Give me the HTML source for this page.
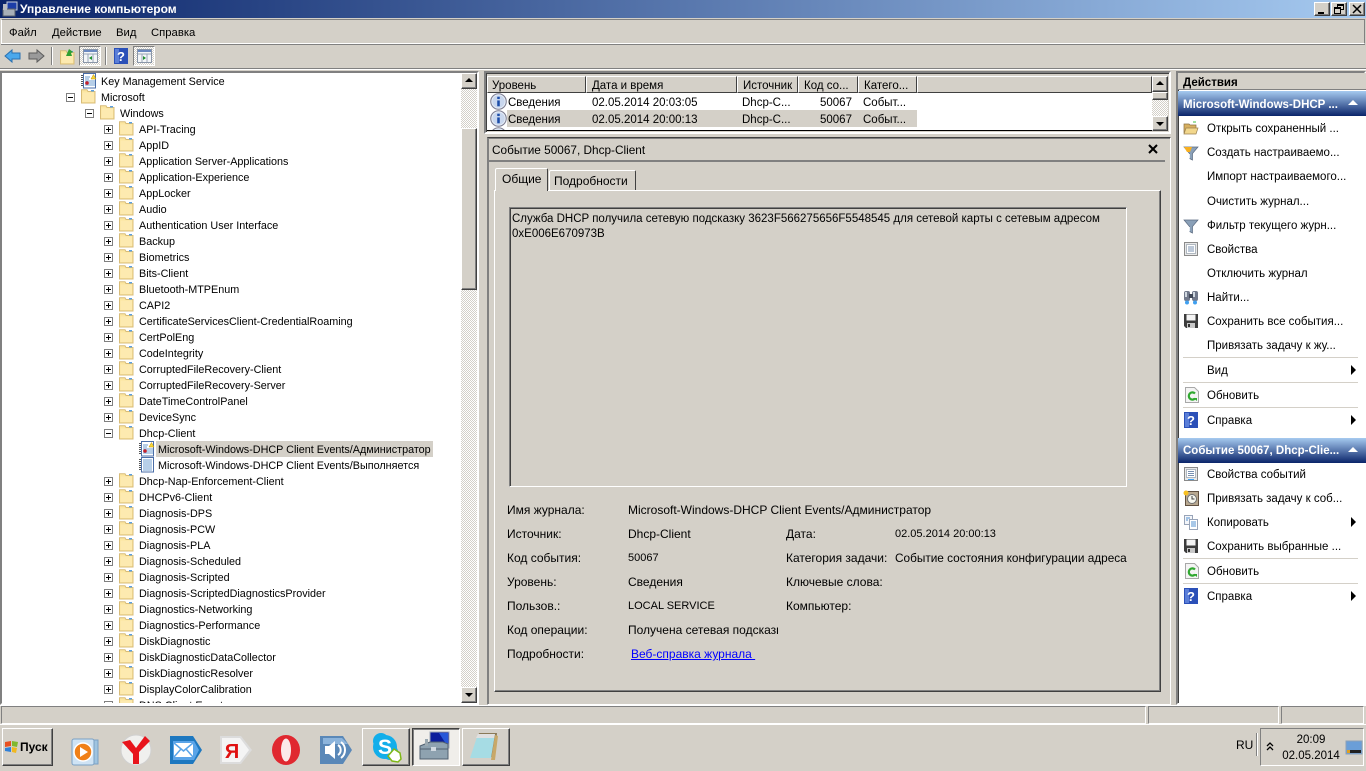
<!DOCTYPE html>
<html lang="ru"><head><meta charset="utf-8"><title>Управление компьютером</title>
<style>
*{box-sizing:border-box}
html,body{margin:0;padding:0}
body{width:1366px;height:768px;overflow:hidden;position:relative;background:#d4d0c8;font:11.5px/18px "Liberation Sans","DejaVu Sans",sans-serif;color:#000}
.a{position:absolute;white-space:nowrap}
.d{font-size:12px}
.n{font-size:11px}
svg{position:absolute;display:block;overflow:visible}
.sunk{border:1px solid;border-color:#808080 #fff #fff #808080}
.sunk2{border:2px solid;border-color:#808080 #fff #fff #808080;box-shadow:inset 1px 1px 0 #404040}
.rais{background:#d4d0c8;border:1px solid;border-color:#fff #404040 #404040 #fff;box-shadow:inset -1px -1px 0 #808080}
.dith{background:repeating-conic-gradient(#fff 0 25%,#d4d0c8 0 50%) 0 0/2px 2px}
.tree{position:absolute;left:2px;top:73px;width:459px;height:630px;overflow:hidden;background:#fff;font-size:10.8px}
.r{position:relative;height:16px;line-height:18px;white-space:nowrap}
.r svg{top:0}
.l1{padding-left:99px}.l2{padding-left:118px}.l3{padding-left:137px}.l4{padding-left:156px}
.h{position:absolute;top:0;height:17px;line-height:19px;padding-left:5px;background:#d4d0c8;border:1px solid;border-color:#fff #404040 #404040 #fff;white-space:nowrap;overflow:hidden}
.sep{position:absolute;left:1183px;width:175px;height:1px;background:#d4d0c8}
.tri{position:absolute;left:1351px;width:0;height:0;border-left:5px solid #000;border-top:5px solid transparent;border-bottom:5px solid transparent}
.bb{position:absolute;top:728px;height:38px}
</style></head><body>
<svg width="0" height="0" style="position:absolute"><defs>
<symbol id="f" viewBox="0 0 16 16"><path d="M.5 14V.8h5.500l1 1.700h7V14z" fill="#fce6a0" stroke="#d8bc78"/><rect x="1.500" y="3.500" width="11.500" height="9.500" fill="#fdeab0"/><rect x="10" y="1" width="3" height="1.500" fill="#5ba0e0"/></symbol>
<symbol id="pl" viewBox="0 0 9 9"><rect x=".5" y=".5" width="8" height="8" fill="#fff" stroke="#808080"/><path d="M2 4.500h5M4.500 2v5" stroke="#000"/></symbol>
<symbol id="mi" viewBox="0 0 9 9"><rect x=".5" y=".5" width="8" height="8" fill="#fff" stroke="#808080"/><path d="M2 4.500h5" stroke="#000"/></symbol>
<symbol id="log" viewBox="0 0 16 16"><rect x="2.500" y=".5" width="12" height="14.500" fill="#fff" stroke="#4a6ea8"/><path d="M1 2v12" stroke="#555" stroke-width="2" stroke-dasharray="1 1"/><path d="M4 4h5M4 6h4M4 8h10M4 10h10M4 12h10" stroke="#6f9fd0"/><path d="M10 6l2.500-4.500L15 6z" fill="#f8d838" stroke="#c09000" stroke-width=".5"/><circle cx="6" cy="10" r="1.800" fill="#c8202a"/></symbol>
<symbol id="log2" viewBox="0 0 16 16"><rect x="2.500" y=".5" width="12" height="14.500" fill="#fff" stroke="#4a6ea8"/><path d="M1 2v12" stroke="#555" stroke-width="2" stroke-dasharray="1 1"/><path d="M4 3h9M4 5h9M4 7h9M4 9h9M4 11h9M4 13h9" stroke="#6f9fd0"/></symbol>
<symbol id="inf" viewBox="0 0 16 16"><circle cx="8" cy="8" r="7.300" fill="#e6edf7" stroke="#7c7c90"/><circle cx="8" cy="8" r="5.800" fill="#c9d7ee"/><rect x="6.800" y="7" width="2.400" height="5.500" fill="#1d4da8"/><rect x="6.800" y="3.500" width="2.400" height="2.200" fill="#1d4da8"/></symbol>
<symbol id="help" viewBox="0 0 14 16"><rect width="14" height="16" fill="#2b50b8"/><rect x="1" y="1" width="4" height="14" fill="#5a7ed8"/><text x="7" y="13" font-family="Liberation Sans" font-weight="bold" font-size="13" fill="#fff" text-anchor="middle">?</text></symbol>
<symbol id="save" viewBox="0 0 16 16"><path d="M1 1h14v14H3l-2-2z" fill="#3c3c3c"/><rect x="3.500" y="1.500" width="9" height="6" fill="#f4f4f4"/><rect x="4" y="10" width="8" height="5" fill="#c8c8c8"/><rect x="5" y="11" width="2" height="3" fill="#333"/></symbol>
<symbol id="ref" viewBox="0 0 14 16"><path d="M.5.5h9l4 4v11H.5z" fill="#f4f4f4" stroke="#a8a8a8"/><path d="M10 11.500A3.600 3.600 0 1 1 10 6.500" fill="none" stroke="#30a830" stroke-width="2.200"/><path d="M8 11h4v3z" fill="#30a830"/></symbol>
<symbol id="filt" viewBox="0 0 16 16"><path d="M1 2h14L9.500 8.500V15l-3-1.500v-5z" fill="#8aa0b8" stroke="#5a6a80" stroke-width=".7"/><path d="M6.500 9v4.500" stroke="#e8eef4"/></symbol>
</defs></svg>

<!-- title -->
<div class="a" style="left:0;top:0;width:1366px;height:18px;background:linear-gradient(90deg,#0a246a 0,#a6caf0 100%)"></div>
<svg style="left:2px;top:1px" width="16" height="16" viewBox="0 0 16 16"><rect x="5" y="1" width="10" height="8" fill="#1c3ea8" stroke="#c8d0dc"/><rect x="1" y="8" width="12" height="7" fill="#a8b0b8" stroke="#58606a"/><rect x="1" y="3" width="4" height="6" fill="#b8bcc0"/></svg>
<div class="a" style="left:20px;top:1px;line-height:16px;font-weight:bold;font-size:12px;color:#fff">Управление компьютером</div>
<div class="a rais" style="left:1314px;top:2px;width:16px;height:14px"><div class="a" style="left:3px;top:9px;width:6px;height:2px;background:#000"></div></div>
<div class="a rais" style="left:1331px;top:2px;width:16px;height:14px"><div class="a" style="left:5px;top:1px;width:7px;height:6px;border:1px solid #000;border-top-width:2px"></div><div class="a" style="left:2px;top:4px;width:7px;height:7px;background:#d4d0c8;border:1px solid #000;border-top-width:2px"></div></div>
<div class="a rais" style="left:1349px;top:2px;width:16px;height:14px"><svg style="left:3px;top:2px" width="8" height="8"><path d="M0 0l8 8M8 0l-8 8" stroke="#000" stroke-width="1.500"/></svg></div>

<!-- menu -->
<div class="a" style="left:1px;top:19px;width:1364px;height:25px;border:1px solid;border-color:#808080 #808080 #fff #fff;box-shadow:0 1px 0 #808080"></div>
<div class="a" style="left:9px;top:24px;font-size:11.300px">Файл</div>
<div class="a" style="left:52px;top:24px;font-size:11.300px">Действие</div>
<div class="a" style="left:116px;top:24px;font-size:11.300px">Вид</div>
<div class="a" style="left:151px;top:24px;font-size:11.300px">Справка</div>

<!-- toolbar -->
<div class="a" style="left:0;top:68px;width:1366px;height:2px;background:#808080;border-bottom:1px solid #fff"></div>
<svg style="left:4px;top:48px" width="18" height="16" viewBox="0 0 18 16"><path d="M1 8l7-6v3h8v6H8v3z" fill="#4aa8ec" stroke="#2a70b0"/></svg>
<svg style="left:27px;top:48px" width="18" height="16" viewBox="0 0 18 16"><path d="M17 8l-7-6v3H2v6h8v3z" fill="#9a9a9a" stroke="#5c5c5c"/></svg>
<div class="a" style="left:51px;top:47px;width:2px;height:18px;border-left:1px solid #808080;border-right:1px solid #fff"></div>
<svg style="left:60px;top:50px" width="16" height="16"><use href="#f" width="16" height="16"/></svg>
<svg style="left:60px;top:47px" width="16" height="16"><path d="M6 9l3-7 4 3-2 1 1 3z" fill="#30a030"/></svg>
<div class="a dith" style="left:79px;top:46px;width:22px;height:20px;border:1px solid;border-color:#808080 #fff #fff #808080"></div>
<svg style="left:83px;top:49px" width="15" height="14" viewBox="0 0 15 14"><rect x=".5" y=".5" width="14" height="13" fill="#f4f6f8" stroke="#8a96a8"/><rect x="1" y="1" width="13" height="2" fill="#6a88c0"/><path d="M1 5h13M5 5v8M10 5v8" stroke="#9aa6b8"/><path d="M9 7v4l-3-2z" fill="#209030"/></svg>
<div class="a" style="left:105px;top:47px;width:2px;height:18px;border-left:1px solid #808080;border-right:1px solid #fff"></div>
<svg style="left:114px;top:48px" width="14" height="16"><use href="#help" width="14" height="16"/></svg>
<div class="a dith" style="left:133px;top:46px;width:22px;height:20px;border:1px solid;border-color:#808080 #fff #fff #808080"></div>
<svg style="left:137px;top:49px" width="15" height="14" viewBox="0 0 15 14"><rect x=".5" y=".5" width="14" height="13" fill="#f4f6f8" stroke="#8a96a8"/><rect x="1" y="1" width="13" height="2" fill="#6a88c0"/><path d="M1 5h13M5 5v8M10 5v8" stroke="#9aa6b8"/><path d="M6 7v4l3-2z" fill="#209030"/></svg>

<!-- left panel -->
<div class="a sunk2" style="left:0;top:71px;width:479px;height:634px"></div>
<div class="tree">
<div class="r l1"><svg style="left:79px" width="16" height="16"><use href="#log" width="16" height="16"/></svg>Key Management Service</div>
<div class="r l1"><svg style="left:64px;top:4px" width="9" height="9"><use href="#mi" width="9" height="9"/></svg><svg style="left:79px" width="16" height="16"><use href="#f" width="16" height="16"/></svg>Microsoft</div>
<div class="r l2"><svg style="left:83px;top:4px" width="9" height="9"><use href="#mi" width="9" height="9"/></svg><svg style="left:98px" width="16" height="16"><use href="#f" width="16" height="16"/></svg>Windows</div>
<div class="r l3"><svg style="left:102px;top:4px" width="9" height="9"><use href="#pl" width="9" height="9"/></svg><svg style="left:117px" width="16" height="16"><use href="#f" width="16" height="16"/></svg>API-Tracing</div>
<div class="r l3"><svg style="left:102px;top:4px" width="9" height="9"><use href="#pl" width="9" height="9"/></svg><svg style="left:117px" width="16" height="16"><use href="#f" width="16" height="16"/></svg>AppID</div>
<div class="r l3"><svg style="left:102px;top:4px" width="9" height="9"><use href="#pl" width="9" height="9"/></svg><svg style="left:117px" width="16" height="16"><use href="#f" width="16" height="16"/></svg>Application Server-Applications</div>
<div class="r l3"><svg style="left:102px;top:4px" width="9" height="9"><use href="#pl" width="9" height="9"/></svg><svg style="left:117px" width="16" height="16"><use href="#f" width="16" height="16"/></svg>Application-Experience</div>
<div class="r l3"><svg style="left:102px;top:4px" width="9" height="9"><use href="#pl" width="9" height="9"/></svg><svg style="left:117px" width="16" height="16"><use href="#f" width="16" height="16"/></svg>AppLocker</div>
<div class="r l3"><svg style="left:102px;top:4px" width="9" height="9"><use href="#pl" width="9" height="9"/></svg><svg style="left:117px" width="16" height="16"><use href="#f" width="16" height="16"/></svg>Audio</div>
<div class="r l3"><svg style="left:102px;top:4px" width="9" height="9"><use href="#pl" width="9" height="9"/></svg><svg style="left:117px" width="16" height="16"><use href="#f" width="16" height="16"/></svg>Authentication User Interface</div>
<div class="r l3"><svg style="left:102px;top:4px" width="9" height="9"><use href="#pl" width="9" height="9"/></svg><svg style="left:117px" width="16" height="16"><use href="#f" width="16" height="16"/></svg>Backup</div>
<div class="r l3"><svg style="left:102px;top:4px" width="9" height="9"><use href="#pl" width="9" height="9"/></svg><svg style="left:117px" width="16" height="16"><use href="#f" width="16" height="16"/></svg>Biometrics</div>
<div class="r l3"><svg style="left:102px;top:4px" width="9" height="9"><use href="#pl" width="9" height="9"/></svg><svg style="left:117px" width="16" height="16"><use href="#f" width="16" height="16"/></svg>Bits-Client</div>
<div class="r l3"><svg style="left:102px;top:4px" width="9" height="9"><use href="#pl" width="9" height="9"/></svg><svg style="left:117px" width="16" height="16"><use href="#f" width="16" height="16"/></svg>Bluetooth-MTPEnum</div>
<div class="r l3"><svg style="left:102px;top:4px" width="9" height="9"><use href="#pl" width="9" height="9"/></svg><svg style="left:117px" width="16" height="16"><use href="#f" width="16" height="16"/></svg>CAPI2</div>
<div class="r l3"><svg style="left:102px;top:4px" width="9" height="9"><use href="#pl" width="9" height="9"/></svg><svg style="left:117px" width="16" height="16"><use href="#f" width="16" height="16"/></svg>CertificateServicesClient-CredentialRoaming</div>
<div class="r l3"><svg style="left:102px;top:4px" width="9" height="9"><use href="#pl" width="9" height="9"/></svg><svg style="left:117px" width="16" height="16"><use href="#f" width="16" height="16"/></svg>CertPolEng</div>
<div class="r l3"><svg style="left:102px;top:4px" width="9" height="9"><use href="#pl" width="9" height="9"/></svg><svg style="left:117px" width="16" height="16"><use href="#f" width="16" height="16"/></svg>CodeIntegrity</div>
<div class="r l3"><svg style="left:102px;top:4px" width="9" height="9"><use href="#pl" width="9" height="9"/></svg><svg style="left:117px" width="16" height="16"><use href="#f" width="16" height="16"/></svg>CorruptedFileRecovery-Client</div>
<div class="r l3"><svg style="left:102px;top:4px" width="9" height="9"><use href="#pl" width="9" height="9"/></svg><svg style="left:117px" width="16" height="16"><use href="#f" width="16" height="16"/></svg>CorruptedFileRecovery-Server</div>
<div class="r l3"><svg style="left:102px;top:4px" width="9" height="9"><use href="#pl" width="9" height="9"/></svg><svg style="left:117px" width="16" height="16"><use href="#f" width="16" height="16"/></svg>DateTimeControlPanel</div>
<div class="r l3"><svg style="left:102px;top:4px" width="9" height="9"><use href="#pl" width="9" height="9"/></svg><svg style="left:117px" width="16" height="16"><use href="#f" width="16" height="16"/></svg>DeviceSync</div>
<div class="r l3"><svg style="left:102px;top:4px" width="9" height="9"><use href="#mi" width="9" height="9"/></svg><svg style="left:117px" width="16" height="16"><use href="#f" width="16" height="16"/></svg>Dhcp-Client</div>
<div class="r l4"><div class="a" style="left:154px;top:0;height:16px;padding:0 2px;background:#d4d0c8">Microsoft-Windows-DHCP Client Events/Администратор</div><svg style="left:137px" width="16" height="16"><use href="#log" width="16" height="16"/></svg></div>
<div class="r l4"><svg style="left:137px" width="16" height="16"><use href="#log2" width="16" height="16"/></svg>Microsoft-Windows-DHCP Client Events/Выполняется</div>
<div class="r l3"><svg style="left:102px;top:4px" width="9" height="9"><use href="#pl" width="9" height="9"/></svg><svg style="left:117px" width="16" height="16"><use href="#f" width="16" height="16"/></svg>Dhcp-Nap-Enforcement-Client</div>
<div class="r l3"><svg style="left:102px;top:4px" width="9" height="9"><use href="#pl" width="9" height="9"/></svg><svg style="left:117px" width="16" height="16"><use href="#f" width="16" height="16"/></svg>DHCPv6-Client</div>
<div class="r l3"><svg style="left:102px;top:4px" width="9" height="9"><use href="#pl" width="9" height="9"/></svg><svg style="left:117px" width="16" height="16"><use href="#f" width="16" height="16"/></svg>Diagnosis-DPS</div>
<div class="r l3"><svg style="left:102px;top:4px" width="9" height="9"><use href="#pl" width="9" height="9"/></svg><svg style="left:117px" width="16" height="16"><use href="#f" width="16" height="16"/></svg>Diagnosis-PCW</div>
<div class="r l3"><svg style="left:102px;top:4px" width="9" height="9"><use href="#pl" width="9" height="9"/></svg><svg style="left:117px" width="16" height="16"><use href="#f" width="16" height="16"/></svg>Diagnosis-PLA</div>
<div class="r l3"><svg style="left:102px;top:4px" width="9" height="9"><use href="#pl" width="9" height="9"/></svg><svg style="left:117px" width="16" height="16"><use href="#f" width="16" height="16"/></svg>Diagnosis-Scheduled</div>
<div class="r l3"><svg style="left:102px;top:4px" width="9" height="9"><use href="#pl" width="9" height="9"/></svg><svg style="left:117px" width="16" height="16"><use href="#f" width="16" height="16"/></svg>Diagnosis-Scripted</div>
<div class="r l3"><svg style="left:102px;top:4px" width="9" height="9"><use href="#pl" width="9" height="9"/></svg><svg style="left:117px" width="16" height="16"><use href="#f" width="16" height="16"/></svg>Diagnosis-ScriptedDiagnosticsProvider</div>
<div class="r l3"><svg style="left:102px;top:4px" width="9" height="9"><use href="#pl" width="9" height="9"/></svg><svg style="left:117px" width="16" height="16"><use href="#f" width="16" height="16"/></svg>Diagnostics-Networking</div>
<div class="r l3"><svg style="left:102px;top:4px" width="9" height="9"><use href="#pl" width="9" height="9"/></svg><svg style="left:117px" width="16" height="16"><use href="#f" width="16" height="16"/></svg>Diagnostics-Performance</div>
<div class="r l3"><svg style="left:102px;top:4px" width="9" height="9"><use href="#pl" width="9" height="9"/></svg><svg style="left:117px" width="16" height="16"><use href="#f" width="16" height="16"/></svg>DiskDiagnostic</div>
<div class="r l3"><svg style="left:102px;top:4px" width="9" height="9"><use href="#pl" width="9" height="9"/></svg><svg style="left:117px" width="16" height="16"><use href="#f" width="16" height="16"/></svg>DiskDiagnosticDataCollector</div>
<div class="r l3"><svg style="left:102px;top:4px" width="9" height="9"><use href="#pl" width="9" height="9"/></svg><svg style="left:117px" width="16" height="16"><use href="#f" width="16" height="16"/></svg>DiskDiagnosticResolver</div>
<div class="r l3"><svg style="left:102px;top:4px" width="9" height="9"><use href="#pl" width="9" height="9"/></svg><svg style="left:117px" width="16" height="16"><use href="#f" width="16" height="16"/></svg>DisplayColorCalibration</div>
<div class="r l3"><svg style="left:102px;top:4px" width="9" height="9"><use href="#pl" width="9" height="9"/></svg><svg style="left:117px" width="16" height="16"><use href="#f" width="16" height="16"/></svg>DNS Client Events</div>
</div>
<!-- left scrollbar -->
<div class="a dith" style="left:461px;top:73px;width:16px;height:630px"></div>
<div class="a rais" style="left:461px;top:73px;width:16px;height:16px"><div class="a" style="left:3px;top:4px;border:4px solid transparent;border-bottom:4px solid #000;border-top:0"></div></div>
<div class="a rais" style="left:461px;top:128px;width:16px;height:162px"></div>
<div class="a rais" style="left:461px;top:687px;width:16px;height:16px"><div class="a" style="left:3px;top:5px;border:4px solid transparent;border-top:4px solid #000;border-bottom:0"></div></div>

<!-- splitter bg: event list -->
<div class="a" style="left:484px;top:71px;width:687px;height:63px;border:2px solid;border-color:#808080 #fff #fff #808080;box-shadow:inset 1px 1px 0 #404040"></div>
<div class="a" style="left:487px;top:76px;width:665px;height:55px;background:#fff;overflow:hidden;border-bottom:1px solid #000">
<div class="h" style="left:0;width:99px;padding-left:4px">Уровень</div>
<div class="h" style="left:99px;width:151px">Дата и время</div>
<div class="h" style="left:250px;width:61px">Источник</div>
<div class="h" style="left:311px;width:60px">Код со...</div>
<div class="h" style="left:371px;width:59px">Катего...</div>
<div class="h" style="left:430px;width:235px"></div>
<div class="a" style="left:20px;top:34px;width:410px;height:17px;background:#d4d0c8"></div>
<svg style="left:3px;top:17px" width="17" height="17"><use href="#inf" width="17" height="17"/></svg>
<svg style="left:3px;top:34px" width="17" height="17"><use href="#inf" width="17" height="17"/></svg>
<svg style="left:3px;top:51px" width="17" height="17"><use href="#inf" width="17" height="17"/></svg>
<div class="a" style="left:21px;top:18px">Сведения</div><div class="a" style="left:105px;top:18px">02.05.2014 20:03:05</div><div class="a" style="left:255px;top:18px">Dhcp-C...</div><div class="a" style="left:333px;top:18px">50067</div><div class="a" style="left:376px;top:18px">Событ...</div>
<div class="a" style="left:21px;top:35px">Сведения</div><div class="a" style="left:105px;top:35px">02.05.2014 20:00:13</div><div class="a" style="left:255px;top:35px">Dhcp-C...</div><div class="a" style="left:333px;top:35px">50067</div><div class="a" style="left:376px;top:35px">Событ...</div>
</div>
<div class="a dith" style="left:1152px;top:76px;width:16px;height:55px"></div>
<div class="a rais" style="left:1152px;top:76px;width:16px;height:16px"><div class="a" style="left:3px;top:4px;border:4px solid transparent;border-bottom:4px solid #000;border-top:0"></div></div>
<div class="a rais" style="left:1152px;top:92px;width:16px;height:8px"></div>
<div class="a rais" style="left:1152px;top:116px;width:16px;height:15px"><div class="a" style="left:3px;top:5px;border:4px solid transparent;border-top:4px solid #000;border-bottom:0"></div></div>

<!-- details -->
<div class="a" style="left:487px;top:137px;width:684px;height:568px;border:1px solid;border-color:#404040 #fff #fff #808080;box-shadow:inset 1px 1px 0 #808080"></div>
<div class="a" style="left:492px;top:141px;font-size:11.800px">Событие 50067, Dhcp-Client</div>
<svg style="left:1148px;top:144px" width="10" height="10"><path d="M1 1l8 8M9 1l-8 8" stroke="#000" stroke-width="2"/></svg>
<div class="a" style="left:489px;top:160px;width:676px;height:2px;background:#808080"></div>
<!-- tab body -->
<div class="a" style="left:494px;top:190px;width:667px;height:502px;border:1px solid;border-color:#fff #404040 #404040 #fff;box-shadow:inset -1px -1px 0 #808080"></div>
<div class="a d" style="left:495px;top:168px;width:53px;height:23px;background:#d4d0c8;border:1px solid #fff;border-bottom:0;border-right:1px solid #404040;border-radius:2px 2px 0 0;padding-left:6px;line-height:21px">Общие</div>
<div class="a d" style="left:549px;top:170px;width:87px;height:20px;background:#d4d0c8;border:1px solid #fff;border-bottom:0;border-right:1px solid #404040;border-radius:2px 2px 0 0;padding-left:4px;line-height:21px">Подробности</div>
<div class="a" style="left:509px;top:207px;width:618px;height:280px;border:1px solid;border-color:#808080 #fff #fff #808080;box-shadow:inset 1px 1px 0 #404040"></div>
<div class="a" style="left:512px;top:212px;line-height:15px">Служба DHCP получила сетевую подсказку 3623F566275656F5548545 для сетевой карты с сетевым адресом<br>0xE006E670973B</div>
<div class="a d" style="left:507px;top:501px">Имя журнала:</div><div class="a d" style="left:628px;top:501px">Microsoft-Windows-DHCP Client Events/Администратор</div>
<div class="a d" style="left:507px;top:525px">Источник:</div><div class="a d" style="left:628px;top:525px">Dhcp-Client</div><div class="a d" style="left:786px;top:525px">Дата:</div><div class="a n" style="left:895px;top:525px">02.05.2014 20:00:13</div>
<div class="a d" style="left:507px;top:549px">Код события:</div><div class="a n" style="left:628px;top:549px">50067</div><div class="a d" style="left:786px;top:549px">Категория задачи:</div><div class="a" style="left:895px;top:549px;font-size:11.800px">Событие состояния конфигурации адреса</div>
<div class="a d" style="left:507px;top:573px">Уровень:</div><div class="a d" style="left:628px;top:573px">Сведения</div><div class="a d" style="left:786px;top:573px">Ключевые слова:</div>
<div class="a d" style="left:507px;top:597px">Пользов.:</div><div class="a n" style="left:628px;top:597px">LOCAL SERVICE</div><div class="a d" style="left:786px;top:597px">Компьютер:</div>
<div class="a d" style="left:507px;top:621px">Код операции:</div><div class="a d" style="left:628px;top:621px;width:150px;overflow:hidden">Получена сетевая подсказка</div>
<div class="a d" style="left:507px;top:645px">Подробности:</div><div class="a d" style="left:631px;top:645px;color:#00f;text-decoration:underline">Веб-справка журнала&nbsp;</div>

<!-- actions -->
<div class="a" style="left:1176px;top:71px;width:190px;height:634px;background:#fff;border:2px solid;border-color:#808080 #fff #fff #808080;box-shadow:inset 1px 1px 0 #404040"></div>
<div class="a" style="left:1178px;top:73px;width:188px;height:17px;background:#d4d0c8;padding-left:5px;font-weight:bold;border-bottom:1px solid #808080;line-height:21px">Действия</div>
<div class="a" style="left:1178px;top:91px;width:188px;height:25px;background:linear-gradient(180deg,#a6caf0,#0a246a);color:#fff;font-weight:bold;padding-left:5px;line-height:29px">Microsoft-Windows-DHCP ...</div>
<div class="a" style="left:1348px;top:100px;border:5px solid transparent;border-bottom:5px solid #fff;border-top:0"></div>
<div class="a" style="left:1178px;top:438px;width:188px;height:25px;background:linear-gradient(180deg,#a6caf0,#0a246a);color:#fff;font-weight:bold;padding-left:5px;line-height:27px">Событие 50067, Dhcp-Clie...</div>
<div class="a" style="left:1348px;top:447px;border:5px solid transparent;border-bottom:5px solid #fff;border-top:0"></div>

<div class="a" style="left:1207px;top:120px">Открыть сохраненный ...</div>
<div class="a" style="left:1207px;top:144px">Создать настраиваемо...</div>
<div class="a" style="left:1207px;top:168px">Импорт настраиваемого...</div>
<div class="a" style="left:1207px;top:193px">Очистить журнал...</div>
<div class="a" style="left:1207px;top:217px">Фильтр текущего журн...</div>
<div class="a" style="left:1207px;top:241px">Свойства</div>
<div class="a" style="left:1207px;top:265px">Отключить журнал</div>
<div class="a" style="left:1207px;top:289px">Найти...</div>
<div class="a" style="left:1207px;top:313px">Сохранить все события...</div>
<div class="a" style="left:1207px;top:337px">Привязать задачу к жу...</div>
<div class="sep" style="top:357px"></div>
<div class="a" style="left:1207px;top:362px">Вид</div><div class="tri" style="top:365px"></div>
<div class="sep" style="top:382px"></div>
<div class="a" style="left:1207px;top:387px">Обновить</div>
<div class="sep" style="top:407px"></div>
<div class="a" style="left:1207px;top:412px">Справка</div><div class="tri" style="top:415px"></div>

<div class="a" style="left:1207px;top:466px">Свойства событий</div>
<div class="a" style="left:1207px;top:490px">Привязать задачу к соб...</div>
<div class="a" style="left:1207px;top:514px">Копировать</div><div class="tri" style="top:517px"></div>
<div class="a" style="left:1207px;top:538px">Сохранить выбранные ...</div>
<div class="sep" style="top:558px"></div>
<div class="a" style="left:1207px;top:563px">Обновить</div>
<div class="sep" style="top:583px"></div>
<div class="a" style="left:1207px;top:588px">Справка</div><div class="tri" style="top:591px"></div>

<svg style="left:1183px;top:121px" width="16" height="14" viewBox="0 0 16 14"><path d="M1 3h5l1 1h6v8H1z" fill="#d8b060" stroke="#8a7040" stroke-width=".7"/><path d="M1 13l2-6h12l-2 6z" fill="#f2d78c" stroke="#9a8050" stroke-width=".7"/><path d="M10 1h3" stroke="#40c040"/></svg>
<svg style="left:1183px;top:145px" width="16" height="16"><use href="#filt" width="16" height="16"/><path d="M1 2h8l-2 5H4z" fill="#f8b020"/></svg>
<svg style="left:1183px;top:218px" width="16" height="16"><use href="#filt" width="16" height="16"/></svg>
<svg style="left:1183px;top:241px" width="16" height="16" viewBox="0 0 16 16"><rect x="1.500" y="1.500" width="13" height="13" fill="#e8e8e8" stroke="#8a8a8a"/><rect x="3.500" y="3.500" width="9" height="9" fill="#fff" stroke="#b0b8c0"/><path d="M5 6h6M5 8h6M5 10h6" stroke="#7890b0"/></svg>
<svg style="left:1183px;top:289px" width="16" height="16" viewBox="0 0 16 16"><rect x="1" y="2" width="6" height="10" rx="2" fill="#70788a"/><rect x="9" y="2" width="6" height="10" rx="2" fill="#70788a"/><rect x="6" y="5" width="4" height="4" fill="#404858"/><rect x="2" y="3" width="2" height="5" fill="#d0d8e0"/><rect x="10" y="3" width="2" height="5" fill="#d0d8e0"/><circle cx="4" cy="13.500" r="2" fill="#40a0f0"/><circle cx="12" cy="13.500" r="2" fill="#40a0f0"/></svg>
<svg style="left:1183px;top:313px" width="16" height="16"><use href="#save" width="16" height="16"/></svg>
<svg style="left:1185px;top:387px" width="14" height="16"><use href="#ref" width="14" height="16"/></svg>
<svg style="left:1184px;top:412px" width="14" height="16"><use href="#help" width="14" height="16"/></svg>
<svg style="left:1183px;top:466px" width="16" height="16" viewBox="0 0 16 16"><rect x="1.500" y="1.500" width="13" height="13" fill="#e8e8e8" stroke="#8a8a8a"/><rect x="3.500" y="3.500" width="9" height="8" fill="#fff" stroke="#b0b8c0"/><path d="M5 5.500h6M5 7.500h6M5 9.500h6" stroke="#7890b0"/><rect x="5" y="13" width="6" height="1" fill="#40a0f0"/></svg>
<svg style="left:1183px;top:490px" width="16" height="16" viewBox="0 0 16 16"><rect x="2.500" y="1.500" width="13" height="14" fill="#b8a890" stroke="#605040"/><circle cx="9" cy="9" r="4.500" fill="#f8f8f0" stroke="#707070"/><path d="M9 6v3h2.500" stroke="#404040" fill="none"/><circle cx="3" cy="3" r="2.500" fill="#f8c020"/></svg>
<svg style="left:1183px;top:514px" width="16" height="16" viewBox="0 0 16 16"><rect x="1.500" y="1.500" width="8" height="9" fill="#f4f6fa" stroke="#98a4b8"/><rect x="6.500" y="5.500" width="8" height="10" fill="#fff" stroke="#98a4b8"/><path d="M3 4h4M3 6h2M8 8h5M8 10h5M8 12h5" stroke="#5090d0"/></svg>
<svg style="left:1183px;top:538px" width="16" height="16"><use href="#save" width="16" height="16"/></svg>
<svg style="left:1185px;top:563px" width="14" height="16"><use href="#ref" width="14" height="16"/></svg>
<svg style="left:1184px;top:588px" width="14" height="16"><use href="#help" width="14" height="16"/></svg>

<!-- status -->
<div class="a" style="left:0;top:705px;width:1366px;height:1px;background:#fff"></div>
<div class="a sunk" style="left:1px;top:706px;width:1145px;height:18px"></div>
<div class="a sunk" style="left:1148px;top:706px;width:131px;height:18px"></div>
<div class="a sunk" style="left:1281px;top:706px;width:83px;height:18px"></div>
<div class="a" style="left:0;top:724px;width:1366px;height:1px;background:#fff"></div>

<!-- taskbar -->
<div class="a rais" style="left:2px;top:728px;width:51px;height:38px"></div>
<svg style="left:4px;top:740px" width="15" height="14" viewBox="0 0 15 14"><path d="M1 2l6-1v5l-6 1z" fill="#e85020"/><path d="M8 1l6 1-1 5-5-1z" fill="#80b830"/><path d="M1 8l6-1v5l-6-1z" fill="#3080d8"/><path d="M8 7l5 1-1 5-4-1z" fill="#f0b820"/></svg>
<div class="a" style="left:20px;top:738px;font-weight:bold;font-size:12px">Пуск</div>

<svg class="bb" style="left:70px;top:733px" width="32" height="30" viewBox="0 0 32 30"><rect x="6" y="3" width="22" height="24" fill="#9fc4e0" stroke="#7aa0c4"/><rect x="2" y="2" width="22" height="26" rx="2" fill="#cfe3f4" stroke="#7aa0c4"/><circle cx="13" cy="15" r="9" fill="#f08018" stroke="#fff" stroke-width="1.500"/><path d="M10 10l8 5-8 5z" fill="#fff"/></svg>
<svg class="bb" style="left:120px;top:731px" width="32" height="32" viewBox="0 0 32 32"><circle cx="16" cy="16" r="15" fill="#f0f0ee" stroke="#d0d0d0"/><path d="M2 8l8-2 6 8 9-12 5 5-11 11v12h-6V20z" fill="#e8141c"/></svg>
<svg class="bb" style="left:169px;top:731px" width="34" height="32" viewBox="0 0 34 32"><path d="M1 2h23l9 14-9 14H1z" fill="#1e78c0"/><path d="M4 7h21l5 9-5 10H4z" fill="#5aa4e8"/><path d="M5 9h19v14H5z" fill="#fff"/><path d="M5 9l9.500 8L24 9M5 23l7-8M24 23l-7-8" fill="none" stroke="#5aa4e8" stroke-width="1.500"/></svg>
<svg class="bb" style="left:219px;top:731px" width="34" height="32" viewBox="0 0 34 32"><path d="M1 2h21l11 14-11 14H1z" fill="#dcdcdc"/><path d="M3 4h18l9 12-9 12H3z" fill="#f4f4f4"/><text x="13" y="24" font-family="Liberation Sans" font-weight="bold" font-size="20" fill="#e01010" text-anchor="middle">Я</text></svg>
<svg class="bb" style="left:271px;top:731px" width="30" height="32" viewBox="0 0 30 32"><ellipse cx="15" cy="16" rx="14" ry="15" fill="#e02830"/><ellipse cx="15" cy="16" rx="5" ry="11.500" fill="#fbeaea"/></svg>
<svg class="bb" style="left:319px;top:731px" width="34" height="32" viewBox="0 0 34 32"><path d="M1 2h23l9 14-9 14H1z" fill="#5a88b8"/><path d="M4 4h19l6 6H4z" fill="#8cb4dc"/><path d="M6 12h4l6-5v18l-6-5H6z" fill="#fff"/><path d="M19 11a6 6 0 0 1 0 10M22 8a10 10 0 0 1 0 16" fill="none" stroke="#fff" stroke-width="2"/></svg>

<div class="a rais" style="left:362px;top:728px;width:48px;height:38px"></div>
<svg style="left:370px;top:732px" width="32" height="32" viewBox="0 0 32 32"><circle cx="11" cy="9" r="8" fill="#12aeea"/><circle cx="20" cy="20" r="8" fill="#12aeea"/><circle cx="15" cy="15" r="12" fill="#12aeea"/><text x="15" y="22" font-family="Liberation Sans" font-weight="bold" font-size="21" fill="#fff" text-anchor="middle">S</text><path d="M24 17l6 4 1 6-3 3-6-1-4-5z" fill="#fff" stroke="#80b818" stroke-width="1.500"/></svg>
<div class="a" style="left:412px;top:728px;width:48px;height:38px;background:#f0eeea;border:1px solid;border-color:#404040 #fff #fff #404040;box-shadow:inset 1px 1px 0 #808080"></div>
<svg style="left:419px;top:730px" width="32" height="32" viewBox="0 0 32 32"><rect x="11" y="2" width="19" height="16" fill="#0c1e9c" stroke="#a0aab8"/><path d="M20 3h9v14z" fill="#2858d8"/><path d="M1 16l10-4h13l5 2v15H1z" fill="#8ea2b0" stroke="#506070"/><path d="M1 19h28" stroke="#506070"/><rect x="6" y="9" width="3" height="7" fill="#9aa8b0"/><rect x="12" y="17" width="5" height="4" fill="#d0d8e0"/></svg>
<div class="a rais" style="left:462px;top:728px;width:48px;height:38px"></div>
<svg style="left:469px;top:731px" width="32" height="32" viewBox="0 0 32 32"><path d="M10 2h18l-2 24H2z" fill="#8a7a58"/><path d="M9 3h17l-4 24H1z" fill="#a6dce4"/><path d="M9 3h17l-1 4H7z" fill="#e0e0e0"/><path d="M26 4l3 1-3 24h-4z" fill="#c8a868"/></svg>

<div class="a" style="left:1236px;top:736px;font-size:12px">RU</div>
<div class="a" style="left:1256px;top:733px;width:2px;height:23px;border-left:1px solid #808080;border-right:1px solid #fff"></div>
<div class="a" style="left:1260px;top:728px;width:104px;height:38px;border:1px solid;border-color:#808080 #fff #fff #808080"></div>
<svg style="left:1266px;top:742px" width="8" height="9"><path d="M1 4l3-3 3 3M1 8l3-3 3 3" fill="none" stroke="#000" stroke-width="1.300"/></svg>
<div class="a" style="left:1277px;top:731px;width:68px;text-align:center">20:09</div>
<div class="a" style="left:1277px;top:747px;width:68px;text-align:center">02.05.2014</div>
<svg style="left:1346px;top:741px" width="16" height="13" viewBox="0 0 16 13"><rect width="16" height="13" fill="#6a9ed8" stroke="#8aa0b8"/><rect x="4" y="9" width="11" height="3" fill="#202020"/><rect x="1" y="9" width="3" height="3" fill="#e0a020"/></svg>
</body></html>
